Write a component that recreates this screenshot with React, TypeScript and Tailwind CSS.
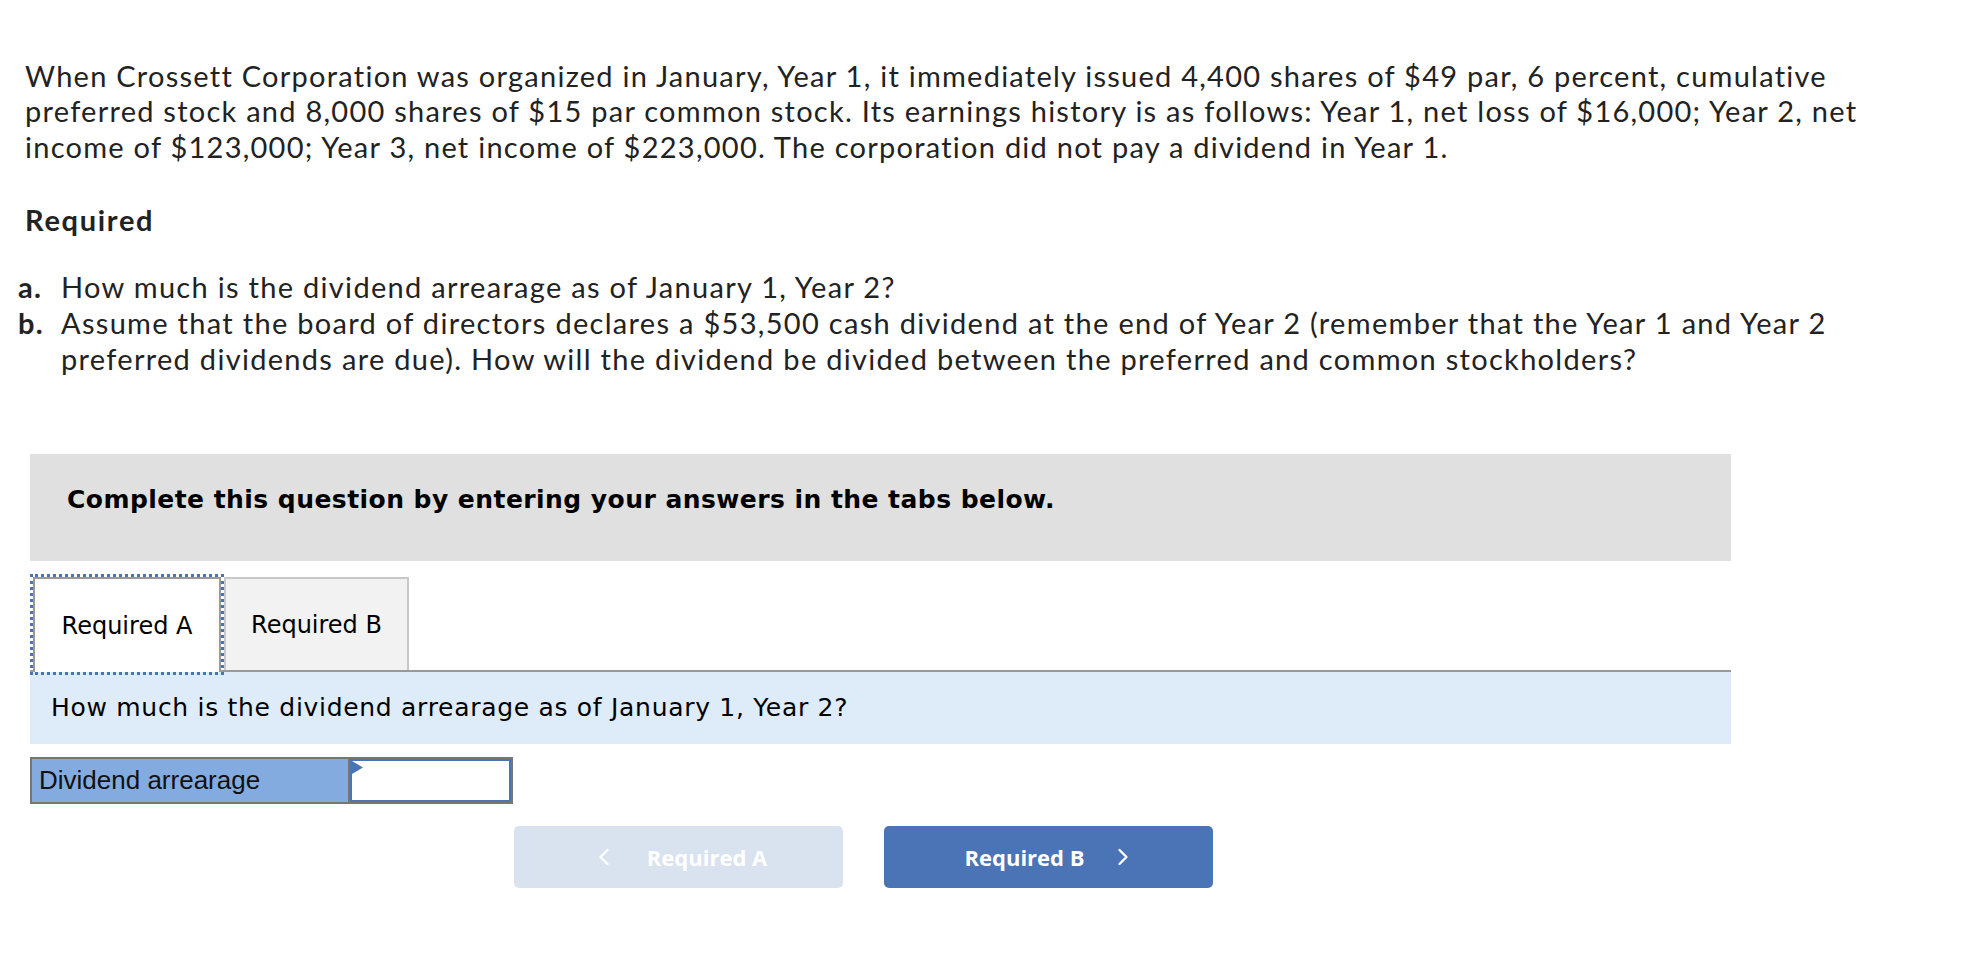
import { ChevronLeft, ChevronRight } from 'lucide-react';

const body = "font-['Lato','Open_Sans',sans-serif]";
const verdana = "font-['DejaVu_Sans','Verdana',sans-serif]";

export default function App() {
  return (
    <div className={`min-h-screen bg-white text-[#222] ${body}`}>
      <div className="pl-[25px] pt-[58px]">
        {/* Problem text */}
        <p className="text-[29px] leading-[35.4px] tracking-[1.25px] whitespace-nowrap">
          When Crossett Corporation was organized in January, Year 1, it immediately issued 4,400 shares of $49 par, 6 percent, cumulative
          <br />
          preferred stock and 8,000 shares of $15 par common stock. Its earnings history is as follows: Year 1, net loss of $16,000; Year 2, net
          <br />
          income of $123,000; Year 3, net income of $223,000. The corporation did not pay a dividend in Year 1.
        </p>

        <h3 className="mt-[38px] text-[29px] font-bold leading-[35px] tracking-[1.7px]">Required</h3>

        <ol className="mt-[32px] -ml-[7px] text-[29px] leading-[36px] tracking-[1.3px]">
          <li className="flex">
            <span className="w-[43px] shrink-0 font-bold">a.</span>
            <span>How much is the dividend arrearage as of January 1, Year 2?</span>
          </li>
          <li className="flex">
            <span className="w-[43px] shrink-0 font-bold">b.</span>
            <span className="whitespace-nowrap">
              Assume that the board of directors declares a $53,500 cash dividend at the end of Year 2 (remember that the Year 1 and Year 2
              <br />
              preferred dividends are due). How will the dividend be divided between the preferred and common stockholders?
            </span>
          </li>
        </ol>
      </div>

      <div className="ml-[30px] mt-[77px] w-[1701px]">
        {/* Instruction box */}
        <div className="flex h-[107px] items-center bg-[#e0e0e0] pb-[16px] pl-[37px]">
          <span className={`${verdana} text-[25px] font-bold tracking-[0.45px] text-black`}>
            Complete this question by entering your answers in the tabs below.
          </span>
        </div>

        {/* Tabs */}
        <div className={`mt-[16px] flex items-end border-b-2 border-[#999] ${verdana}`}>
          <button className="-mb-[2px] ml-[3px] mr-[3px] flex h-[95px] w-[188px] items-center justify-center border-2 border-b-0 border-[#999] bg-white text-[24px] text-black outline-3 outline-dotted outline-[#4a74b5]">
            Required A
          </button>
          <button className="flex h-[93px] w-[185px] items-center justify-center border-2 border-b-0 border-[#c8c8c8] bg-[#f2f2f2] text-[24px] text-black">
            Required B
          </button>
        </div>

        <div className="flex h-[72px] items-center bg-[#deebf8] pl-[21px]">
          <span className={`${verdana} text-[25px] tracking-[0.7px] text-black`}>
            How much is the dividend arrearage as of January 1, Year 2?
          </span>
        </div>

        {/* Answer row */}
        <div className="mt-[13px] flex h-[47px] w-[483px] border-2 border-[#767676]">
          <div className="flex w-[318px] items-center border-r-2 border-[#767676] bg-[#84abdf] pl-[7px] font-['Liberation_Sans',Arial,sans-serif] text-[26px] text-[#111]">
            Dividend arrearage
          </div>
          <div className="relative flex-1 border-2 border-[#4a74b5] bg-white">
            <svg className="absolute left-0 top-0" width="11" height="13" viewBox="0 0 11 13">
              <polygon points="0,0 11,6.5 0,13" fill="#4a74b5" />
            </svg>
          </div>
        </div>

        {/* Navigation */}
        <div className="mt-[22px] ml-[484px] flex gap-[41px] font-['Open_Sans',sans-serif]">
          <button className="flex h-[62px] w-[329px] items-center justify-center gap-[29px] rounded-[5px] bg-[#d9e3f0] text-[22px] font-bold text-white">
            <ChevronLeft size={28} strokeWidth={2} />
            <span>Required A</span>
          </button>
          <button className="flex h-[62px] w-[329px] items-center justify-center gap-[24px] rounded-[5px] bg-[#4a74b5] pl-[4px] text-[22px] font-bold text-white">
            <span>Required B</span>
            <ChevronRight size={28} strokeWidth={2} />
          </button>
        </div>
      </div>
    </div>
  );
}
